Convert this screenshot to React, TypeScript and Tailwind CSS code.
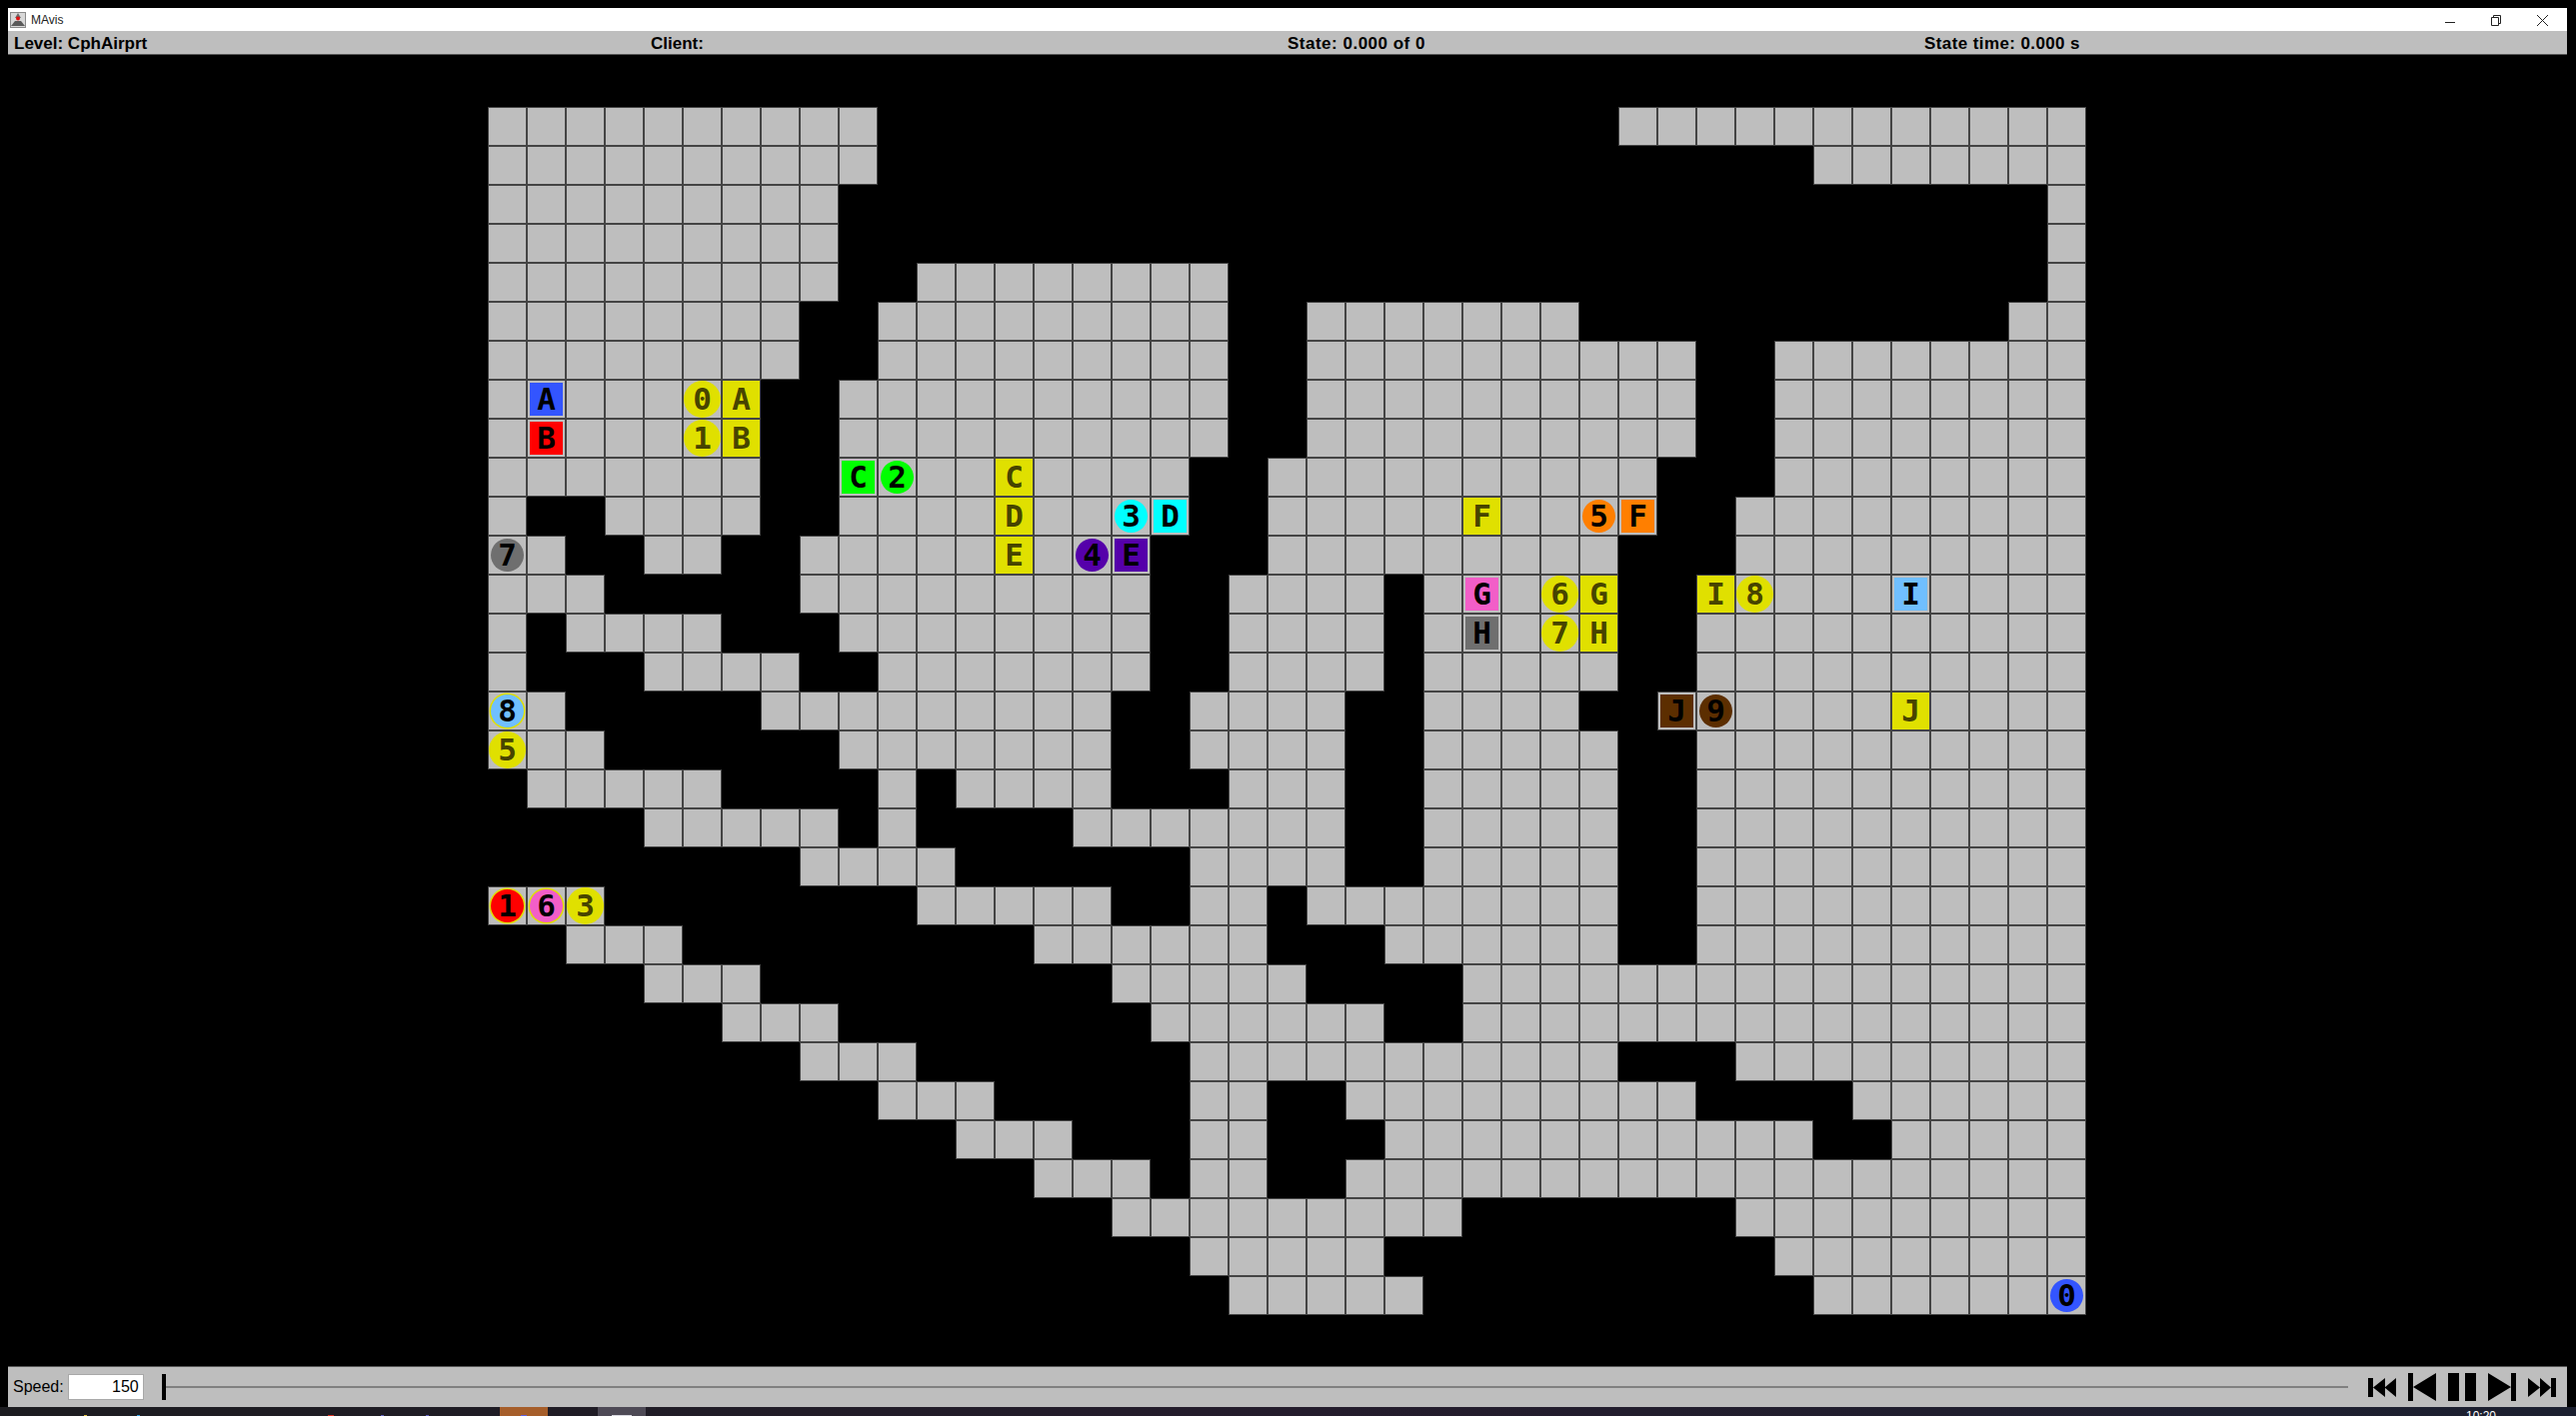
import { Fragment } from 'react';

// free floor cells per row, as [from, to] column ranges
const ROWS: [number, number][][] = [
  [[0, 9], [29, 40]],
  [[0, 9], [34, 40]],
  [[0, 8], [40, 40]],
  [[0, 8], [40, 40]],
  [[0, 8], [11, 18], [40, 40]],
  [[0, 7], [10, 18], [21, 27], [39, 40]],
  [[0, 7], [10, 18], [21, 30], [33, 40]],
  [[0, 6], [9, 18], [21, 30], [33, 40]],
  [[0, 6], [9, 18], [21, 30], [33, 40]],
  [[0, 6], [9, 17], [20, 29], [33, 40]],
  [[0, 0], [3, 6], [9, 17], [20, 29], [32, 40]],
  [[0, 1], [4, 5], [8, 16], [20, 28], [32, 40]],
  [[0, 2], [8, 16], [19, 22], [24, 28], [31, 40]],
  [[0, 0], [2, 5], [9, 16], [19, 22], [24, 28], [31, 40]],
  [[0, 0], [4, 7], [10, 16], [19, 22], [24, 28], [31, 40]],
  [[0, 1], [7, 15], [18, 21], [24, 27], [30, 40]],
  [[0, 2], [9, 15], [18, 21], [24, 28], [31, 40]],
  [[1, 5], [10, 10], [12, 15], [19, 21], [24, 28], [31, 40]],
  [[4, 8], [10, 10], [15, 21], [24, 28], [31, 40]],
  [[8, 11], [18, 21], [24, 28], [31, 40]],
  [[0, 2], [11, 15], [18, 19], [21, 28], [31, 40]],
  [[2, 4], [14, 19], [23, 28], [31, 40]],
  [[4, 6], [16, 20], [25, 40]],
  [[6, 8], [17, 22], [25, 40]],
  [[8, 10], [18, 28], [32, 40]],
  [[10, 12], [18, 19], [22, 30], [35, 40]],
  [[12, 14], [18, 19], [23, 33], [36, 40]],
  [[14, 16], [18, 19], [22, 40]],
  [[16, 24], [32, 40]],
  [[18, 22], [33, 40]],
  [[19, 23], [34, 40]],
];

type Piece = { label: string; kind: 'box' | 'agent' | 'goal' | 'spot'; color?: string };

const BLUE = 'bg-[#3355ff]';
const RED = 'bg-[#ff0000]';
const GREEN = 'bg-[#00ff00]';
const CYAN = 'bg-[#00ffff]';
const PURPLE = 'bg-[#5500aa]';
const ORANGE = 'bg-[#ff7f00]';
const PINK = 'bg-[#f25ec8]';
const GRAY = 'bg-[#6f6f6f]';
const SKY = 'bg-[#70bfff]';
const BROWN = 'bg-[#5c2e00]';
const ON_GOAL = 'ring-[1.5px] ring-[#e0e000]';

const PIECES: Record<string, Piece> = {
  '7,1': { label: 'A', kind: 'box', color: BLUE },
  '8,1': { label: 'B', kind: 'box', color: RED },
  '7,5': { label: '0', kind: 'spot' },
  '8,5': { label: '1', kind: 'spot' },
  '7,6': { label: 'A', kind: 'goal' },
  '8,6': { label: 'B', kind: 'goal' },
  '9,9': { label: 'C', kind: 'box', color: GREEN },
  '9,10': { label: '2', kind: 'agent', color: GREEN },
  '9,13': { label: 'C', kind: 'goal' },
  '10,13': { label: 'D', kind: 'goal' },
  '11,13': { label: 'E', kind: 'goal' },
  '10,16': { label: '3', kind: 'agent', color: CYAN },
  '10,17': { label: 'D', kind: 'box', color: CYAN },
  '11,15': { label: '4', kind: 'agent', color: PURPLE },
  '11,16': { label: 'E', kind: 'box', color: PURPLE },
  '11,0': { label: '7', kind: 'agent', color: GRAY },
  '10,25': { label: 'F', kind: 'goal' },
  '10,28': { label: '5', kind: 'agent', color: ORANGE },
  '10,29': { label: 'F', kind: 'box', color: ORANGE },
  '12,25': { label: 'G', kind: 'box', color: PINK },
  '12,27': { label: '6', kind: 'spot' },
  '12,28': { label: 'G', kind: 'goal' },
  '12,31': { label: 'I', kind: 'goal' },
  '12,32': { label: '8', kind: 'spot' },
  '12,36': { label: 'I', kind: 'box', color: SKY },
  '13,25': { label: 'H', kind: 'box', color: GRAY },
  '13,27': { label: '7', kind: 'spot' },
  '13,28': { label: 'H', kind: 'goal' },
  '15,30': { label: 'J', kind: 'box', color: BROWN },
  '15,31': { label: '9', kind: 'agent', color: BROWN },
  '15,36': { label: 'J', kind: 'goal' },
  '15,0': { label: '8', kind: 'agent', color: `${SKY} ${ON_GOAL}` },
  '16,0': { label: '5', kind: 'spot' },
  '20,0': { label: '1', kind: 'agent', color: `${RED} ${ON_GOAL}` },
  '20,1': { label: '6', kind: 'agent', color: `${PINK} ${ON_GOAL}` },
  '20,2': { label: '3', kind: 'spot' },
  '30,40': { label: '0', kind: 'agent', color: BLUE },
};

const CELL_TEXT = "flex items-center justify-center font-['DejaVu_Sans_Mono',monospace] font-bold text-[31px] leading-none";

function CellPiece({ piece }: { piece: Piece }) {
  if (piece.kind === 'goal') {
    return <div className={`${CELL_TEXT} h-full w-full bg-[#e0e000] text-[#474400]`}>{piece.label}</div>;
  }
  if (piece.kind === 'spot') {
    return <div className={`${CELL_TEXT} h-full w-full rounded-full bg-[#e0e000] text-[#474400]`}>{piece.label}</div>;
  }
  if (piece.kind === 'box') {
    return <div className={`${CELL_TEXT} h-[33px] w-[33px] text-black ${piece.color}`}>{piece.label}</div>;
  }
  return <div className={`${CELL_TEXT} h-[33px] w-[33px] rounded-full text-black ${piece.color}`}>{piece.label}</div>;
}

function Board() {
  return (
    <div className="grid grid-cols-[repeat(41,39px)] grid-rows-[repeat(31,39px)]">
      {ROWS.map((ranges, r) => (
        <Fragment key={r}>
          {Array.from({ length: 41 }).map((_, c) => {
            const floor = ranges.some(([a, b]) => c >= a && c <= b);
            if (!floor) return <div key={c} />;
            const piece = PIECES[`${r},${c}`];
            return (
              <div key={c} className="flex items-center justify-center border border-[#444] bg-[#bebebe]">
                {piece && <CellPiece piece={piece} />}
              </div>
            );
          })}
        </Fragment>
      ))}
    </div>
  );
}

function AppIcon() {
  return (
    <svg width="16" height="16" viewBox="0 0 16 16">
      <rect x="0.5" y="0.5" width="15" height="15" fill="#d8d8d8" stroke="#8a8a8a" />
      <path d="M1 14 L5 9 L11 9 L15 14 Z" fill="#5a5a5a" />
      <path d="M8 1 L11 6 L5 6 Z" fill="#6b6b6b" />
      <circle cx="8" cy="6.5" r="2" fill="#e01010" />
    </svg>
  );
}

function TransportIcon({ d }: { d: string }) {
  return (
    <svg width="28" height="28" viewBox="0 0 28 28" className="fill-black">
      <path d={d} />
    </svg>
  );
}

export default function App() {
  return (
    <div className="flex h-[1417px] w-[2577px] flex-col overflow-hidden bg-black font-['Liberation_Sans',sans-serif]">
      <div className="h-2 shrink-0" />

      <div className="ml-2 mr-[9px] flex h-[23px] shrink-0 items-center bg-white pl-[2px] text-black">
        <AppIcon />
        <span className="ml-[5px] text-[12px] text-[#222]">MAvis</span>
        <svg width="104" height="14" viewBox="0 0 104 14" className="ml-auto mr-[18px] fill-none stroke-[#222]">
          <path d="M0 9.5 H10" />
          <path d="M46.5 4.5 H53.5 V12.5 H46.5 Z" />
          <path d="M48.5 4.5 V2.5 H55.5 V10.5 H53.5" />
          <path d="M92 2 L103 13 M103 2 L92 13" />
        </svg>
      </div>

      <div className="ml-2 mr-[9px] grid h-6 shrink-0 grid-cols-[repeat(4,637px)] items-center border-b border-[#555] bg-[#bebebe] pl-[6px] text-[17px] font-bold text-black">
        <span>Level: CphAirprt</span>
        <span>Client:</span>
        <span className="tracking-[0.5px]">State: 0.000 of 0</span>
        <span className="tracking-[0.4px]">State time: 0.000 s</span>
      </div>

      <main className="flex flex-1 items-center justify-center pr-[2px] pt-px">
        <Board />
      </main>

      <div className="ml-2 mr-[9px] flex h-[41px] shrink-0 items-center border-t border-[#555] bg-[#bebebe] pl-[5px] pr-[11px] text-[16px] text-black">
        <span>Speed:</span>
        <div className="ml-[4px] flex h-[26px] w-[76px] items-center justify-end border border-[#a8a8a8] bg-white pr-[4px]">150</div>
        <div className="relative ml-[18px] h-[26px] flex-1">
          <div className="absolute left-0 right-0 top-[12px] h-[2px] bg-[#808080]" />
          <div className="absolute left-0 top-0 h-[26px] w-[4px] bg-black" />
        </div>
        <div className="ml-[20px] flex items-center gap-[12px]">
          <TransportIcon d="M0 5 H5 V24 H0 Z M5 14.5 L17 5 V24 Z M16.5 14.5 L28 5 V24 Z" />
          <TransportIcon d="M0 0 H5 V28 H0 Z M5 14 L28 0 V28 Z" />
          <TransportIcon d="M0 0 H11 V28 H0 Z M17 0 H28 V28 H17 Z" />
          <TransportIcon d="M0 0 L23 14 L0 28 Z M23 0 H28 V28 H23 Z" />
          <TransportIcon d="M0 5 L12 14.5 L0 24 Z M12 5 L23 14.5 L12 24 Z M23 5 H28 V24 H23 Z" />
        </div>
      </div>

      <div className="flex h-[9px] shrink-0 items-end overflow-hidden bg-gradient-to-r from-[#1c1c20] via-[#241c2c] to-[#1c2030]">
        <div className="ml-[84px] h-px w-[3px] bg-[#e0c040]" />
        <div className="ml-[50px] h-px w-[3px] bg-[#30a0e0]" />
        <div className="ml-[188px] h-px w-[6px] bg-[#d83020]" />
        <div className="ml-[47px] h-px w-[3px] bg-[#6060c0]" />
        <div className="ml-[42px] h-px w-[3px] bg-[#6060c0]" />
        <div className="ml-[71px] flex h-full w-[48px] items-end justify-center bg-[#a65e2a]">
          <div className="h-px w-[6px] bg-[#6060e0]" />
        </div>
        <div className="ml-[50px] flex h-full w-[48px] items-end justify-center bg-[#4e4a56]">
          <div className="h-px w-[20px] bg-[#d8d8e0]" />
        </div>
        <span className="mb-[-6px] ml-[1821px] text-[12px] leading-none text-white">10:20</span>
      </div>
    </div>
  );
}
